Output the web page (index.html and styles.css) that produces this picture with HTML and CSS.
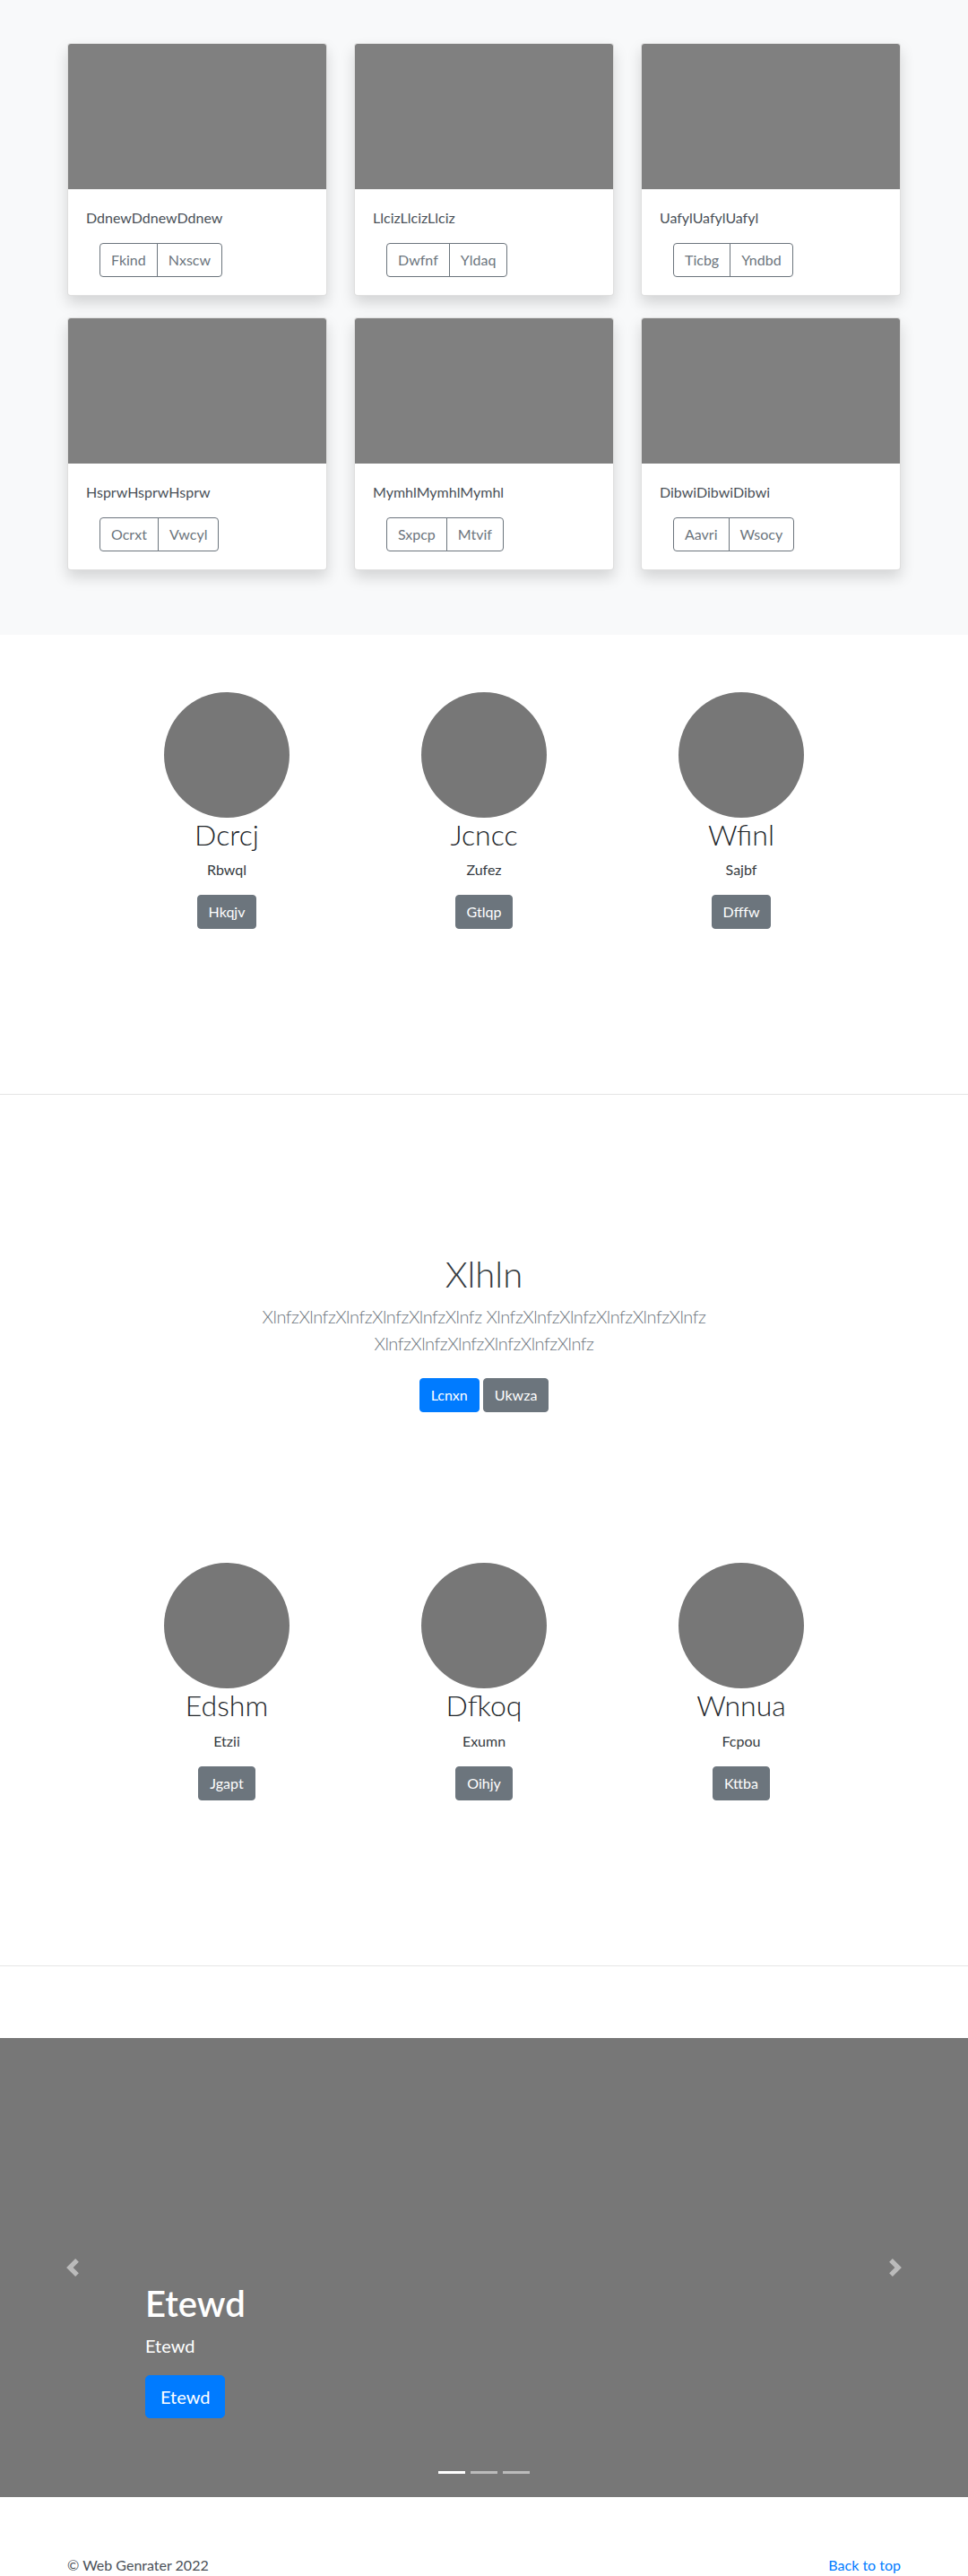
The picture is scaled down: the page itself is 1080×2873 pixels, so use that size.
FILE: index.html
```html
<!DOCTYPE html>
<html lang="en">
<head>
<meta charset="utf-8">
<title>Web Genrater</title>
<link rel="stylesheet" href="styles.css">
</head>
<body>
<main>
  <section class="album">
    <div class="container">
      <div class="card-grid">
        <div class="card">
          <div class="card-img"></div>
          <div class="card-body">
            <p class="card-text">DdnewDdnewDdnew</p>
            <div class="card-actions">
              <div class="btn-group"><a class="btn btn-outline">Fkind</a><a class="btn btn-outline">Nxscw</a></div>
            </div>
          </div>
        </div>
        <div class="card">
          <div class="card-img"></div>
          <div class="card-body">
            <p class="card-text">LlcizLlcizLlciz</p>
            <div class="card-actions">
              <div class="btn-group"><a class="btn btn-outline">Dwfnf</a><a class="btn btn-outline">Yldaq</a></div>
            </div>
          </div>
        </div>
        <div class="card">
          <div class="card-img"></div>
          <div class="card-body">
            <p class="card-text">UafylUafylUafyl</p>
            <div class="card-actions">
              <div class="btn-group"><a class="btn btn-outline">Ticbg</a><a class="btn btn-outline">Yndbd</a></div>
            </div>
          </div>
        </div>
        <div class="card">
          <div class="card-img"></div>
          <div class="card-body">
            <p class="card-text">HsprwHsprwHsprw</p>
            <div class="card-actions">
              <div class="btn-group"><a class="btn btn-outline">Ocrxt</a><a class="btn btn-outline">Vwcyl</a></div>
            </div>
          </div>
        </div>
        <div class="card">
          <div class="card-img"></div>
          <div class="card-body">
            <p class="card-text">MymhlMymhlMymhl</p>
            <div class="card-actions">
              <div class="btn-group"><a class="btn btn-outline">Sxpcp</a><a class="btn btn-outline">Mtvif</a></div>
            </div>
          </div>
        </div>
        <div class="card">
          <div class="card-img"></div>
          <div class="card-body">
            <p class="card-text">DibwiDibwiDibwi</p>
            <div class="card-actions">
              <div class="btn-group"><a class="btn btn-outline">Aavri</a><a class="btn btn-outline">Wsocy</a></div>
            </div>
          </div>
        </div>
      </div>
    </div>
  </section>

  <section class="marketing">
    <div class="feature-row">
      <div class="feature">
        <div class="circle"></div>
        <h2>Dcrcj</h2>
        <p>Rbwql</p>
        <div class="feature-action"><a class="btn btn-secondary">Hkqjv</a></div>
      </div>
      <div class="feature">
        <div class="circle"></div>
        <h2>Jcncc</h2>
        <p>Zufez</p>
        <div class="feature-action"><a class="btn btn-secondary">Gtlqp</a></div>
      </div>
      <div class="feature">
        <div class="circle"></div>
        <h2>Wfinl</h2>
        <p>Sajbf</p>
        <div class="feature-action"><a class="btn btn-secondary">Dfffw</a></div>
      </div>
    </div>
  </section>

  <hr class="divider">

  <section class="jumbotron">
    <div class="narrow">
      <h1>Xlhln</h1>
      <p class="lead">XlnfzXlnfzXlnfzXlnfzXlnfzXlnfz XlnfzXlnfzXlnfzXlnfzXlnfzXlnfz XlnfzXlnfzXlnfzXlnfzXlnfzXlnfz</p>
      <p class="jumbo-actions"><a class="btn btn-primary">Lcnxn</a> <a class="btn btn-secondary">Ukwza</a></p>
    </div>
  </section>

  <section class="marketing">
    <div class="feature-row">
      <div class="feature">
        <div class="circle"></div>
        <h2>Edshm</h2>
        <p>Etzii</p>
        <div class="feature-action"><a class="btn btn-secondary">Jgapt</a></div>
      </div>
      <div class="feature">
        <div class="circle"></div>
        <h2>Dfkoq</h2>
        <p>Exumn</p>
        <div class="feature-action"><a class="btn btn-secondary">Oihjy</a></div>
      </div>
      <div class="feature">
        <div class="circle"></div>
        <h2>Wnnua</h2>
        <p>Fcpou</p>
        <div class="feature-action"><a class="btn btn-secondary">Kttba</a></div>
      </div>
    </div>
  </section>

  <hr class="divider">

  <section class="carousel">
    <ol class="indicators">
      <li class="active"></li>
      <li></li>
      <li></li>
    </ol>
    <div class="carousel-caption">
      <h1>Etewd</h1>
      <p class="caption-text">Etewd</p>
      <div class="caption-action"><a class="btn btn-primary btn-lg">Etewd</a></div>
    </div>
    <a class="control control-prev">
      <svg width="20" height="20" viewBox="0 0 8 8"><path fill="#fff" d="M5.25 0l-4 4 4 4 1.5-1.5-2.5-2.5 2.5-2.5-1.5-1.5z"/></svg>
    </a>
    <a class="control control-next">
      <svg width="20" height="20" viewBox="0 0 8 8"><path fill="#fff" d="M2.75 0l-1.5 1.5 2.5 2.5-2.5 2.5 1.5 1.5 4-4-4-4z"/></svg>
    </a>
  </section>
</main>

<footer class="footer">
  <p>&copy; Web Genrater 2022</p>
  <p><a class="top-link" href="#">Back to top</a></p>
</footer>
</body>
</html>
```

FILE: styles.css
```css
* { box-sizing: border-box; }

html, body { margin: 0; padding: 0; }

body {
  font-family: Lato, "Open Sans", "Liberation Sans", sans-serif;
  font-size: 16px;
  line-height: 1.5;
  color: #212529;
  background: #fff;
}

p { margin: 0 0 16px; }

h1, h2 { margin: 0 0 8px; line-height: 1.2; }

.container { width: 930px; margin: 0 auto; }

/* ---------- buttons ---------- */
.btn {
  display: inline-block;
  font-size: 16px;
  line-height: 24px;
  font-weight: 400;
  padding: 6px 12px;
  border: 1px solid transparent;
  border-radius: 4px;
  text-align: center;
  text-decoration: none;
  white-space: nowrap;
}
.btn-outline { color: #6c757d; border-color: #6c757d; background: transparent; }
.btn-secondary { color: #fff; background: #6c757d; border-color: #6c757d; }
.btn-primary { color: #fff; background: #007bff; border-color: #007bff; }
.btn-lg { font-size: 20px; line-height: 30px; padding: 8px 16px; border-radius: 5px; }

.btn-group { display: inline-flex; }
.btn-group .btn:first-child { border-top-right-radius: 0; border-bottom-right-radius: 0; }
.btn-group .btn + .btn { margin-left: -1px; border-top-left-radius: 0; border-bottom-left-radius: 0; }

/* ---------- album ---------- */
.album { background: #f8f9fa; padding: 48px 0; }
.card-grid { display: grid; grid-template-columns: repeat(3, 290px); column-gap: 30px; }
.card {
  background: #fff;
  border: 1px solid rgba(0, 0, 0, .125);
  border-radius: 4px;
  overflow: hidden;
  margin-bottom: 24px;
  box-shadow: 0 8px 16px rgba(0, 0, 0, .15);
}
.card-img { height: 162px; background: #808080; }
.card-body { padding: 20px; }
.card-text { color: #495057; }
.card-actions { display: flex; padding-left: 15px; }

/* ---------- marketing ---------- */
.marketing { padding: 64px 0; }
.feature-row { display: flex; justify-content: center; }
.feature { width: 287px; text-align: center; margin-bottom: 24px; }
.circle { width: 140px; height: 140px; border-radius: 50%; background: #777; margin: 0 auto; }
.feature h2 { font-size: 32px; font-weight: 300; color: #212529; }
.feature p { margin: 0 12px 16px; color: #343a40; }
.feature-action { display: flex; justify-content: center; margin-bottom: 16px; }

.divider { margin: 80px 0; border: 0; border-top: 1px solid rgba(0, 0, 0, .1); height: 0; }

/* ---------- jumbotron ---------- */
.jumbotron { padding: 96px 0; text-align: center; }
.narrow { max-width: 640px; margin: 0 auto; }
.jumbotron h1 { font-size: 40px; font-weight: 300; color: #343a40; }
.lead { font-size: 20px; line-height: 30px; font-weight: 300; color: #6c757d; letter-spacing: -0.5px; }
.jumbo-actions { margin: 0; }
.jumbo-actions .btn { margin: 8px 0; }

/* ---------- carousel ---------- */
.carousel { position: relative; height: 512px; background: #777; margin-bottom: 64px; }
.carousel-caption {
  position: absolute;
  left: 15%;
  right: 15%;
  bottom: 52px;
  padding: 20px 0;
  color: #fff;
  text-align: left;
  z-index: 10;
}
.carousel-caption h1 { font-size: 40px; font-weight: 600; }
.caption-text { font-size: 20px; line-height: 30px; margin-bottom: 18px; }
.caption-action { display: flex; margin-bottom: 16px; }

.indicators {
  position: absolute;
  left: 0;
  right: 0;
  bottom: 0;
  margin: 0 0 16px;
  padding: 0;
  list-style: none;
  display: flex;
  justify-content: center;
  z-index: 15;
}
.indicators li { width: 30px; height: 3px; margin: 10px 3px; background: #fff; opacity: .5; }
.indicators li.active { opacity: 1; }

.control {
  position: absolute;
  top: 0;
  bottom: 0;
  width: 15%;
  display: flex;
  align-items: center;
  justify-content: center;
  opacity: .5;
}
.control-prev { left: 0; }
.control-next { right: 0; }
.control svg { display: block; }

/* ---------- footer ---------- */
.footer { width: 930px; margin: 0 auto; display: flex; justify-content: space-between; color: #495057; }
.top-link { color: #007bff; text-decoration: none; }
```
